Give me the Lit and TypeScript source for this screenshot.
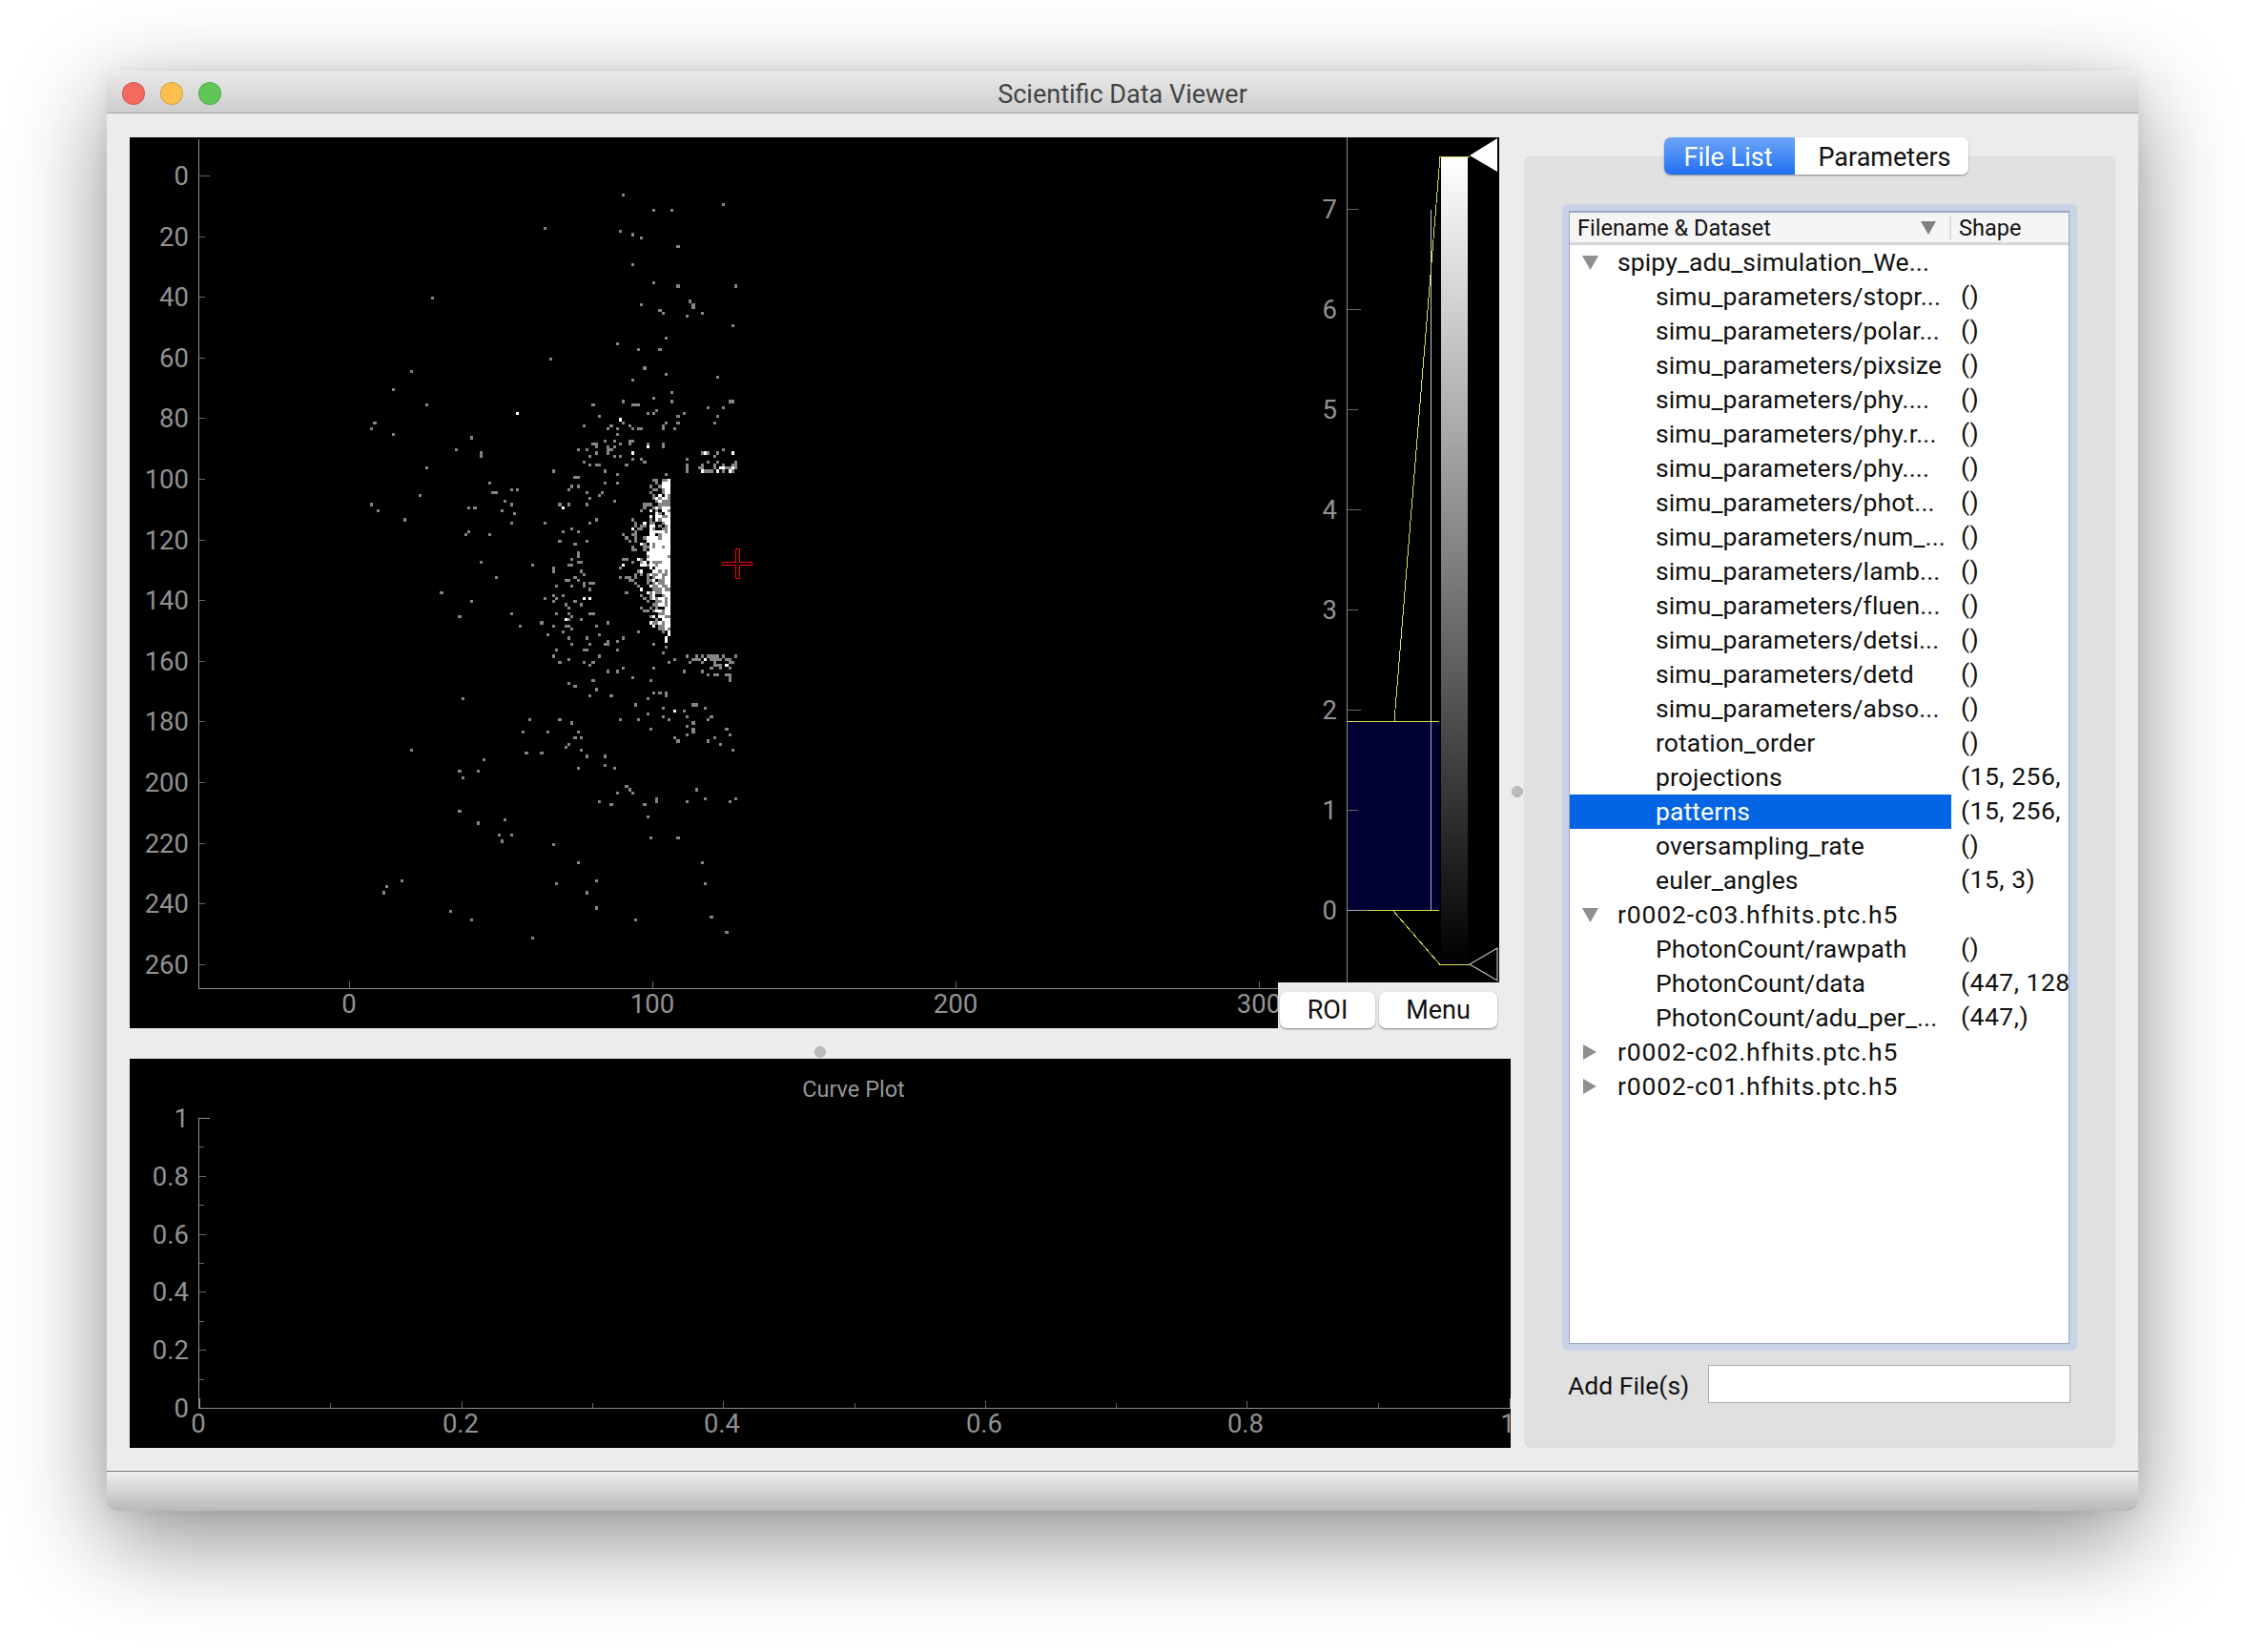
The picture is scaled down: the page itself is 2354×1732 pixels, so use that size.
import { LitElement, css, html, svg } from "lit";
import { customElement } from "lit/decorators.js";

const PX = 3.18;
const X0 = 366;
const Y0 = 184;

// scatter points read off 3x crops: origin of the crop, then x,y pairs
const GRAY: [number, number, number[]][] = [
  [500, 190, [461,46,556,93,613,93,775,73,214,151,451,160,490,169,519,178,633,208,490,265,556,322,633,331,814,331,670,379,681,389,681,397,519,388,576,406,586,417,709,417,661,427,805,454,595,493,442,511,508,532,576,532,232,559,529,589,595,607,757,616,490,625]],
  [370, 290, [250,70,184,298,127,355,232,403,70,460,61,478,127,497,376,508,328,546,403,560,232,603,214,688,61,717,79,736,166,765,365,727,385,727,366,802,355,811,403,898,280,994,376,1021,337,1069]],
  [500, 400, [613,34,556,54,461,64,613,64,794,64,804,64,367,73,491,73,500,73,509,73,727,82,775,82,565,91,538,100,556,100,652,100,385,110,633,110,757,110,461,130,595,130,633,130,748,130,337,139,423,139,481,139,413,148,442,148,490,148,508,148,518,148,586,139,586,148,622,148,442,168,403,187,433,187,481,187,490,187,367,196,376,196,451,196,481,196,538,196,586,196,586,205,376,205,413,205,433,205,319,215,347,215,413,215,423,215,775,215,413,225,376,225,709,226,727,226,757,226,13,226,13,235,357,235,433,235,451,235,748,235,490,244,518,244,661,244,337,254,529,254,727,254,757,254,357,263,376,263,385,263,472,263,661,263,709,263,748,263,775,263,805,263,814,254,814,263,661,273,696,273,705,273,748,273,786,273,795,273,814,273,241,283,403,283,661,283,718,283,728,283,738,283,775,283,805,283,442,292,595,292,310,301,320,301,565,311,595,311,44,320,403,320,442,320,604,320,586,330,604,330,300,330,319,330,289,340,109,340,127,340,565,340,586,340,52,349,62,349,347,349,394,349,547,349,595,349,385,358,357,367,556,367,595,367,90,377,433,377,109,387,262,387,289,387,347,387,80,406,118,415,214,445,109,445,357,445,376,435,490,435,499,454,271,472,300,463,319,472,44,481,462,481,472,491,262,506,347,502,310,511,319,540,319,549,300,559,13,568,175,577,290,577,300,577,319,568,328,568,462,559,452,587,241,587,241,596,328,596,337,606,61,616,310,616,280,625,290,625,319,625,452,616,472,616,481,616,481,625,252,644,300,644,337,634,337,644,357,634,367,634,357,653,472,664,271,673,241,673,214,682,252,682,241,691,310,691,281,701,328,701,289,711,109,730,252,730,289,730,357,730,367,730,300,739,289,748,328,748,137,769,205,759,413,759,241,769,280,769,290,769,376,769,300,778,271,787,223,797,385,797,289,805,347,805,462,805,442,816,413,816,300,826,357,826,404,826,413,826,338,845,347,845,252,845,442,845,241,862,385,862,289,873,262,883,338,883,367,883,357,892,414,911,442,911,462,901,556,901,652,911,604,883,622,873,586,853,556,826,595,835,508,787,490,929,547,940,289,949,310,958,367,940,376,967,357,988,424,988,556,978,576,978,595,978,595,988,538,997,500,1015,586,1024,681,1015,691,1015,718,1024,652,1035,538,1045,586,1053,661,1053,738,1053,166,1063,262,1063,451,1063,508,1063,604,1063,727,1063,300,1072,681,1072,661,1081,681,1091,681,1100,547,1091,785,1091,148,1101,223,1101,319,1101,661,1111,795,1111,310,1120,328,1120,622,1120,748,1120,632,1129,727,1129,289,1139,767,1139,281,1150,328,1159,157,1168,205,1168,805,1159,347,1177,404,1177,22,1187,404,1207,319,1216,433,1216,4,1225,661,862,690,862,709,862,728,862,738,862,748,862,757,862,775,862,814,862,680,873,690,873,700,873,738,873,748,873,757,873,767,873,785,873,795,873,670,883,709,883,748,883,795,883,805,883,748,892,757,892,767,892,738,901,767,901,795,901,709,911,727,920,748,920,757,920,785,920,795,920,795,930,795,940]],
  [370, 690, [346,127,184,289,337,355,346,373,862,403,871,412,880,421,832,421,1081,412,1108,442,1051,451,955,442,955,451,775,451,814,460,919,460,1185,451,1204,442,928,499,337,478,394,517,480,508,460,556,499,556,469,574,631,583,937,565,1023,565,709,640,1099,640,157,697,766,697,109,718,642,708,1108,708,99,736,736,736,766,784,309,793,376,823,889,823,1128,813,1174,859,565,880]],
];
const WHITE: [number, number, number[]][] = [
  [500, 400, [127,100,451,121,538,205,490,226,805,226,718,226,767,273,776,273,805,273,709,283,757,283,795,283,604,340,604,349,575,358,271,397,490,463,462,577,337,682,357,682,281,748,595,806,595,816,718,873,785,892,622,1035]],
];

function cellRect(i: number, j: number) {
  const x = Math.round(X0 + PX * i);
  const y = Math.round(Y0 + PX * j);
  const w = Math.round(X0 + PX * (i + 1)) - x;
  const h = Math.round(Y0 + PX * (j + 1)) - y;
  return `M${x} ${y}h${w}v${h}h${-w}z`;
}

function buildCells() {
  const cells = new Map<string, number>();
  const put = (sx: number, sy: number, v: number) => {
    const i = Math.floor((sx - X0) / PX);
    const j = Math.floor((sy - Y0) / PX);
    cells.set(`${i},${j}`, v);
  };
  for (const [ox, oy, pts] of GRAY) {
    for (let k = 0; k < pts.length; k += 2) put(ox + pts[k] / 3, oy + pts[k + 1] / 3, 1);
  }
  // dense edge of the diffraction pattern, against the beam stop
  let seed = 20231;
  const rnd = () => {
    seed = (seed * 16807) % 2147483647;
    return seed / 2147483647;
  };
  for (let j = 100; j <= 151; j++) {
    const t = Math.abs(j - 125) / 26;
    const reach = 5 + 10 * (1 - t);
    for (let i = 90; i <= 105; i++) {
      const d = 105 - i;
      const near = 1 - d / reach;
      const a = rnd();
      const b = rnd();
      const block = d < 7 && Math.abs(j - 123) < 7;
      if (block ? a < 0.96 : a < near * 0.95 + 0.14) {
        cells.set(`${i},${j}`, (block ? b < 0.82 : b < near * 0.8 * (1 - t * 0.3)) ? 2 : 1);
      }
    }
  }
  for (const [ox, oy, pts] of WHITE) {
    for (let k = 0; k < pts.length; k += 2) put(ox + pts[k] / 3, oy + pts[k + 1] / 3, 2);
  }
  let gray = "";
  let white = "";
  cells.forEach((v, key) => {
    const [i, j] = key.split(",").map(Number);
    if (v === 2) white += cellRect(i, j);
    else gray += cellRect(i, j);
  });
  return { gray, white };
}

const SCATTER = buildCells();

type Row = { name: string; shape?: string; arrow?: "open" | "closed"; selected?: boolean; digits?: boolean };

const ROWS: Row[] = [
  { name: "spipy_adu_simulation_We...", arrow: "open" },
  { name: "simu_parameters/stopr...", shape: "()" },
  { name: "simu_parameters/polar...", shape: "()" },
  { name: "simu_parameters/pixsize", shape: "()" },
  { name: "simu_parameters/phy....", shape: "()" },
  { name: "simu_parameters/phy.r...", shape: "()" },
  { name: "simu_parameters/phy....", shape: "()" },
  { name: "simu_parameters/phot...", shape: "()" },
  { name: "simu_parameters/num_...", shape: "()" },
  { name: "simu_parameters/lamb...", shape: "()" },
  { name: "simu_parameters/fluen...", shape: "()" },
  { name: "simu_parameters/detsi...", shape: "()" },
  { name: "simu_parameters/detd", shape: "()" },
  { name: "simu_parameters/abso...", shape: "()" },
  { name: "rotation_order", shape: "()" },
  { name: "projections", shape: "(15, 256," },
  { name: "patterns", shape: "(15, 256,", selected: true },
  { name: "oversampling_rate", shape: "()" },
  { name: "euler_angles", shape: "(15, 3)" },
  { name: "r0002-c03.hfhits.ptc.h5", arrow: "open", digits: true },
  { name: "PhotonCount/rawpath", shape: "()" },
  { name: "PhotonCount/data", shape: "(447, 128" },
  { name: "PhotonCount/adu_per_...", shape: "(447,)" },
  { name: "r0002-c02.hfhits.ptc.h5", arrow: "closed", digits: true },
  { name: "r0002-c01.hfhits.ptc.h5", arrow: "closed", digits: true },
];

const range = (n: number) => Array.from({ length: n }, (_, i) => i);

@customElement("image-plot")
class ImagePlot extends LitElement {
  static styles = css`
    :host {
      display: block;
      position: relative;
      width: 1436px;
      height: 934px;
    }
    svg {
      display: block;
      background: #000;
    }
    .axis { stroke: #8f8f8f; stroke-width: 1; fill: none; }
    .tick { stroke: #666; stroke-width: 1; fill: none; }
    .label {
      fill: #929292;
      font: 27.5px Roboto, "Liberation Sans", sans-serif;
      dominant-baseline: central;
    }
    .end { text-anchor: end; }
    .mid { text-anchor: middle; }
    .yellow { stroke: #dede55; stroke-width: 1; fill: none; }
    .corner {
      position: absolute;
      right: 0;
      bottom: 0;
      width: 232px;
      height: 48px;
      box-sizing: border-box;
      background: #ececec;
      padding: 10px 2px 0;
      display: flex;
      gap: 4px;
    }
    button {
      height: 38px;
      padding: 0;
      background: #fff;
      border: none;
      border-radius: 7px;
      box-shadow: 0 1px 2px rgba(0, 0, 0, 0.45);
      color: #111;
      font: 27px Roboto, "Liberation Sans", sans-serif;
    }
    .roi { width: 100px; }
    .menu { width: 124px; }
  `;

  render() {
    const yLabels = range(14).map((i) => i * 20);
    const hist = [0, 1, 2, 3, 4, 5, 6, 7];
    return html`
      <svg width="1436" height="934" viewBox="136 144 1436 934" shape-rendering="crispEdges">
        <defs>
          <linearGradient id="bar" x1="0" y1="0" x2="0" y2="1">
            <stop offset="0" stop-color="#fff"></stop>
            <stop offset="1" stop-color="#000"></stop>
          </linearGradient>
        </defs>
        <path d=${SCATTER.gray} fill="#858585"></path>
        <path d=${SCATTER.white} fill="#fff"></path>
        <path class="axis" d="M208.5 146V1036.5H1412"></path>
        ${yLabels.map((v, i) => {
          const y = Math.round(184 + i * 63.6) + 0.5;
          return svg`
            <path class="tick" d="M209 ${y}H${i === 0 ? 220 : 215}"></path>
            <text class="label end" x="198" y=${y}>${v}</text>`;
        })}
        ${[0, 100, 200, 300].map((v, i) => {
          const x = 366 + i * 318;
          return svg`
            <path class="tick" d="M${x + 0.5} 1029V1036"></path>
            <text class="label mid" x=${x} y="1052">${v}</text>`;
        })}

        <rect x="1412" y="756" width="97" height="198" fill="#000033"></rect>
        <rect x="1511" y="165" width="28" height="847" fill="url(#bar)"></rect>
        <path class="axis" d="M1412.5 144V1030"></path>
        ${hist.map((v) => {
          const y = Math.round(954 - v * 105) + 0.5;
          return svg`
            <path class="tick" d=${`M1413 ${y}H${v % 2 === 0 && v > 0 ? 1427 : 1424}`}></path>
            <text class="label end" x="1402" y=${y}>${v}</text>`;
        })}
        <path d="M1500.5 220V756" stroke="#c8c8c8" stroke-width="1" fill="none"></path>
        <path d="M1500.5 756V954.5" stroke="#a8a8c8" stroke-width="1" fill="none"></path>
        <path d="M1412 954.5H1500" stroke="#a8a8a8" stroke-width="1" fill="none"></path>
        <path class="yellow" d="M1412 756.5H1509"></path>
        <path class="yellow" d="M1434 954.5H1509"></path>
        <path class="yellow" d="M1462 756L1510 164.5H1541"></path>
        <path class="yellow" d="M1460 954L1510 1011.5H1541"></path>
        <g shape-rendering="auto">
          <path d="M1541 163L1570 145V180Z" fill="#fff"></path>
          <path d="M1541 1011L1570 994V1028Z" fill="#000" stroke="#bbb" stroke-width="1.2"></path>
          <path d="M771.5 575.5H775.5V589.5H788.5V592.5H775.5V606.5H771.5V592.5H757.5V589.5H771.5Z" fill="none" stroke="#f00" stroke-width="1"></path>
        </g>
      </svg>
      <div class="corner">
        <button class="roi">ROI</button>
        <button class="menu">Menu</button>
      </div>
    `;
  }
}

@customElement("curve-plot")
class CurvePlot extends LitElement {
  static styles = css`
    :host {
      display: block;
      width: 1448px;
      height: 408px;
    }
    svg {
      display: block;
      background: #000;
    }
    .axis { stroke: #8f8f8f; stroke-width: 1; fill: none; }
    .tick { stroke: #666; stroke-width: 1; fill: none; }
    .label {
      fill: #929292;
      font: 27.5px Roboto, "Liberation Sans", sans-serif;
      dominant-baseline: central;
    }
    .title {
      fill: #979797;
      font: 23.5px Roboto, "Liberation Sans", sans-serif;
      dominant-baseline: central;
      text-anchor: middle;
    }
    .end { text-anchor: end; }
    .mid { text-anchor: middle; }
  `;

  render() {
    const names = ["0", "0.2", "0.4", "0.6", "0.8", "1"];
    return html`
      <svg width="1448" height="408" viewBox="136 1110 1448 408" shape-rendering="crispEdges">
        <text class="title" x="895" y="1142">Curve Plot</text>
        <path class="axis" d="M208.5 1172V1476.5H1584M209.5 1466V1476M1583.5 1466V1476"></path>
        <path class="axis" d="M209 1172.5H220"></path>
        ${range(11).map((i) => {
          const y = Math.round(1476 - i * 30.4) + 0.5;
          const x = Math.round(209 + i * 137.3) + 0.5;
          return svg`
            ${i > 0 && i < 10
              ? svg`<path class="tick" d="M209 ${y}H${i % 2 === 0 ? 216 : 214}"></path>
                    <path class="tick" d="M${x} 1476V${i % 2 === 0 ? 1469 : 1471}"></path>`
              : null}`;
        })}
        ${names.map((v, i) => {
          const y = Math.round(1476 - i * 60.8);
          const x = Math.round(208 + i * 274.6);
          return svg`
            <text class="label end" x="198" y=${y}>${v}</text>
            <text class="label mid" x=${x} y="1492">${v}</text>`;
        })}
      </svg>
    `;
  }
}

@customElement("file-tree")
class FileTree extends LitElement {
  static styles = css`
    :host {
      display: block;
      width: 540px;
      height: 1202px;
      box-sizing: border-box;
      padding: 7px 8px 7px 7px;
      background: #c8d3e6;
      border-radius: 6px;
      font-family: Roboto, "Liberation Sans", sans-serif;
      color: #111;
    }
    .tree {
      height: 100%;
      box-sizing: border-box;
      background: #fff;
      border: 1px solid #9aa8bf;
      border-top-width: 2px;
      overflow: hidden;
    }
    .head {
      display: flex;
      align-items: center;
      height: 31px;
      background: #f5f5f5;
      border-bottom: 3px solid #d6d6d6;
      font-size: 23.5px;
    }
    .head-name {
      width: 400px;
      height: 24px;
      box-sizing: border-box;
      padding-left: 8px;
      display: flex;
      align-items: center;
      justify-content: space-between;
      padding-right: 14px;
      border-right: 2px solid #dcdcdc;
      white-space: nowrap;
    }
    .head-shape { padding-left: 8px; }
    .sort { display: block; }
    .row {
      display: flex;
      height: 36px;
      line-height: 34px;
      font-size: 26.5px;
      white-space: nowrap;
    }
    .name {
      width: 400px;
      flex: none;
      display: flex;
      align-items: center;
      box-sizing: border-box;
      padding: 0 0 1px 90px;
      letter-spacing: 0.12px;
    }
    .parent .name { padding-left: 13px; }
    .digits .name { letter-spacing: 0.85px; }
    .twisty { width: 37px; flex: none; display: block; }
    .selected .name { background: #0465e4; color: #fff; }
    .shape {
      flex: 1;
      min-width: 0;
      padding-left: 10px;
      letter-spacing: 0.5px;
    }
  `;

  render() {
    return html`
      <div class="tree">
        <div class="head">
          <div class="head-name">
            <span>Filename &amp; Dataset</span>
            <svg class="sort" width="16" height="16" viewBox="0 0 16 16">
              <path d="M0 1H16L8 15Z" fill="#808080"></path>
            </svg>
          </div>
          <div class="head-shape">Shape</div>
        </div>
        ${ROWS.map(
          (r) => html`
            <div class="row ${r.arrow ? "parent" : ""} ${r.selected ? "selected" : ""} ${r.digits ? "digits" : ""}">
              <div class="name">
                ${r.arrow
                  ? html`<svg class="twisty" width="37" height="18" viewBox="0 0 37 18">
                      ${r.arrow === "open"
                        ? svg`<path d="M0 2H17L8.5 17Z" fill="#8f8f8f"></path>`
                        : svg`<path d="M1 1L15 9L1 17Z" fill="#8f8f8f"></path>`}
                    </svg>`
                  : null}
                <span>${r.name}</span>
              </div>
              <div class="shape">${r.shape ?? ""}</div>
            </div>
          `
        )}
      </div>
    `;
  }
}

@customElement("app-root")
export class AppRoot extends LitElement {
  static styles = css`
    :host {
      display: block;
      min-height: 1732px;
      box-sizing: border-box;
      padding: 75px 112px 0;
      background: #fff;
      font-family: Roboto, "Liberation Sans", sans-serif;
    }
    .window {
      width: 2130px;
      height: 1509px;
      display: flex;
      flex-direction: column;
      background: #ececec;
      border-radius: 10px;
      box-shadow: 0 30px 100px rgba(0, 0, 0, 0.45), 0 0 20px rgba(0, 0, 0, 0.06);
    }
    .titlebar {
      height: 44px;
      flex: none;
      display: flex;
      align-items: center;
      position: relative;
      justify-content: center;
      box-sizing: border-box;
      padding-top: 3px;
      background: linear-gradient(#e9e9e9, #cdcdcd);
      border-radius: 10px 10px 0 0;
      border-top: 1px solid #f4f4f4;
      border-bottom: 1px solid #a9a9a9;
      color: #444;
      font-size: 27px;
    }
    .lights {
      position: absolute;
      left: 16px;
      top: 10px;
      display: flex;
      gap: 16px;
    }
    .light {
      width: 24px;
      height: 24px;
      box-sizing: border-box;
      border-radius: 50%;
      border: 1px solid rgba(0, 0, 0, 0.14);
    }
    .red { background: #f46a5e; }
    .yellow { background: #fbc04e; }
    .green { background: #60c657; }
    .body {
      flex: 1;
      min-height: 0;
      display: flex;
      box-sizing: border-box;
      padding: 25px 24px 24px;
      gap: 14px;
    }
    .left {
      width: 1448px;
      flex: none;
      position: relative;
      display: flex;
      flex-direction: column;
      gap: 32px;
    }
    .dot {
      position: absolute;
      width: 12px;
      height: 12px;
      border-radius: 50%;
      background: #bcbcbc;
      border: 1px solid #b0b0b0;
      box-sizing: border-box;
    }
    .dot-h { left: 718px; top: 953px; }
    .dot-v { left: 1449px; top: 680px; }
    .panel {
      flex: 1;
      min-width: 0;
      display: flex;
      flex-direction: column;
      align-items: flex-start;
      margin-top: 20px;
      background: #e0e0e0;
      border-radius: 8px;
      box-shadow: inset 0 0 0 1px #dcdcdc;
    }
    .tabs {
      margin: -20px 0 31px 147px;
      display: flex;
      height: 39px;
      border-radius: 7px;
      overflow: hidden;
      box-shadow: 0 1px 2px rgba(0, 0, 0, 0.4);
      font-size: 27px;
      line-height: 43px;
      text-align: center;
    }
    .tab-on {
      width: 137px;
      box-sizing: border-box;
      padding-right: 3px;
      background: linear-gradient(#6fa6f8, #1f70f2);
      color: #fff;
    }
    .tab-off {
      width: 182px;
      box-sizing: border-box;
      padding-left: 6px;
      background: #fff;
      color: #111;
    }
    file-tree { margin-left: 40px; }
    .add {
      display: flex;
      align-items: center;
      margin: 15px 0 0 46px;
      font-size: 26.5px;
      color: #111;
    }
    .add-label { width: 147px; padding-top: 3px; }
    .add-input {
      width: 380px;
      height: 40px;
      box-sizing: border-box;
      background: #fff;
      border: 1.5px solid #aaa;
    }
    .status {
      height: 42px;
      flex: none;
      box-sizing: border-box;
      background: linear-gradient(#ededed, #b9b9b9);
      border-top: 1px solid #7a7a7a;
      border-radius: 0 0 10px 10px;
    }
  `;

  render() {
    return html`
      <div class="window">
        <div class="titlebar">
          <div class="lights">
            <div class="light red"></div>
            <div class="light yellow"></div>
            <div class="light green"></div>
          </div>
          Scientific Data Viewer
        </div>
        <div class="body">
          <div class="left">
            <image-plot></image-plot>
            <curve-plot></curve-plot>
            <div class="dot dot-h"></div>
            <div class="dot dot-v"></div>
          </div>
          <div class="panel">
            <div class="tabs">
              <div class="tab-on">File List</div>
              <div class="tab-off">Parameters</div>
            </div>
            <file-tree></file-tree>
            <div class="add">
              <div class="add-label">Add File(s)</div>
              <div class="add-input"></div>
            </div>
          </div>
        </div>
        <div class="status"></div>
      </div>
    `;
  }
}
